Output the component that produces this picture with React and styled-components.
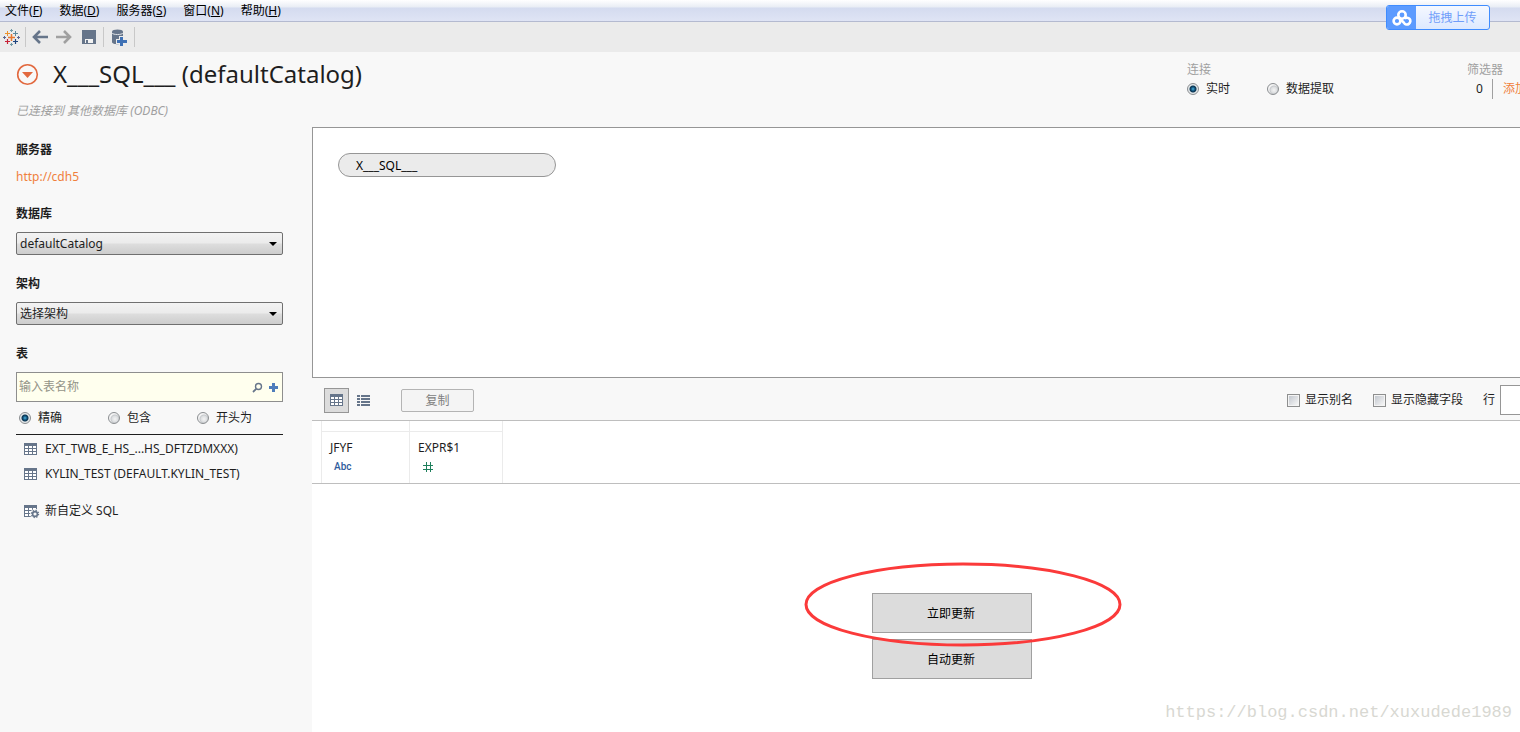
import React from "react";
import styled, { createGlobalStyle } from "styled-components";

const GlobalStyle = createGlobalStyle`
  * {
    box-sizing: border-box;
  }
  body {
    margin: 0;
    background: #ffffff;
    color: #1e1e1e;
    font-family: "Noto Sans", "Noto Sans CJK SC", sans-serif;
    font-size: 12px;
    line-height: 16px;
  }
  button, input, select {
    font: inherit;
    color: inherit;
    margin: 0;
  }
`

const Page = styled.div`
  display: flex;
  flex-direction: column;
  min-height: 100vh;
  overflow: hidden;
  background: #f8f8f8;
  position: relative;
`

const MenuBar = styled.nav`
  display: flex;
  gap: 17px;
  height: 22px;
  padding: 0 5px;
  border-bottom: 1px solid #b4bad0;
  background: linear-gradient(#ffffff 0, #e9edf5 7px, #d4dbef 8px, #dfe4f5 21px);
`

const MenuItem = styled.button`
  border: 0;
  padding: 0;
  background: none;
  color: #000000;
  line-height: 20px;
`

const ToolBar = styled.div`
  display: flex;
  align-items: center;
  height: 30px;
  background: #ebebeb;
`

const ToolButton = styled.button`
  display: flex;
  justify-content: center;
  width: ${(props) => props.$width || 24}px;
  border: 0;
  padding: 0;
  background: none;
`

const StartButton = styled(ToolButton)`
  width: 25px;
  padding-right: 2px;
`

const Divider = styled.span`
  width: 1px;
  height: 20px;
  background: #c8c8c8;
`

const UploadButton = styled.button`
  position: absolute;
  top: 5px;
  right: 30px;
  display: flex;
  width: 104px;
  height: 25px;
  padding: 0;
  border: 1px solid #3f8cff;
  border-radius: 3px;
  overflow: hidden;
  background: linear-gradient(#f5f8ff, #dde9ff);
  color: #6f9dfa;
  line-height: 24px;
`

const UploadIcon = styled.span`
  display: flex;
  align-items: center;
  justify-content: center;
  width: 29px;
  height: 23px;
  background: #5c9bff;
`

const UploadText = styled.span`
  flex: 1;
`

const Header = styled.header`
  display: flex;
  justify-content: space-between;
  height: 75px;
  padding-left: 16px;
`

const TitleRow = styled.div`
  display: flex;
  align-items: center;
  gap: 14px;
  height: 44px;
`

const Title = styled.h1`
  margin: 0;
  font-size: 24px;
  line-height: 32px;
  font-weight: 400;
  white-space: nowrap;
`

const RoundButton = styled.button`
  display: flex;
  border: 0;
  padding: 0;
  background: none;
`

const Subtitle = styled.p`
  margin: 7px 0 0;
  color: #a0a0a0;
  font-style: italic;
`

const HeaderOptions = styled.div`
  display: flex;
  flex: none;
  padding-top: 10px;
  width: 333px;
`

const ConnectionGroup = styled.fieldset`
  flex: none;
  width: 280px;
  margin: 0;
  padding: 0;
  border: 0;
`

const GroupLabel = styled.legend`
  padding: 0;
  color: #a0a0a0;
`

const OptionRow = styled.div`
  display: flex;
  align-items: center;
  height: 22px;
`

const RadioLabel = styled.label`
  display: flex;
  align-items: center;
  gap: 7px;
  width: ${(props) => props.$width}px;
  white-space: nowrap;
`

const Radio = styled.input.attrs({ type: "radio" })`
  appearance: none;
  width: 12px;
  height: 12px;
  border: 1px solid #8a8d90;
  border-radius: 50%;
  background: radial-gradient(circle at 60% 60%, #f4f4f4 0, #dcdee0 3px, #c6c9cc 4px, #f4f4f4 5px);
  &:checked {
    background: radial-gradient(circle, #4cb4e0 0, #0f4f78 2px, #0d3550 3px, #e4e8ea 4px);
  }
`

const FilterGroup = styled.div`
  flex: none;
  width: 125px;
`

const FilterLabel = styled.div`
  color: #a0a0a0;
`

const FilterCount = styled.span`
  width: 26px;
  padding-left: 9px;
  border-right: 1px solid #a0a0a0;
  line-height: 20px;
`

const Link = styled.a`
  color: #f0803c;
  text-decoration: none;
  padding-left: ${(props) => props.$indent || 0}px;
`

const Body = styled.div`
  display: flex;
  flex: 1;
`

const SideBar = styled.aside`
  flex: none;
  width: 312px;
  padding: 15px 29px 0 16px;
`

const Heading = styled.h2`
  display: block;
  margin: 0;
  font-size: 12px;
  line-height: 16px;
  font-weight: 700;
`

const ServerRow = styled.div`
  padding: 11px 0 21px;
`

const Field = styled.div`
  display: grid;
  align-items: center;
  margin: 10px 0 21px;
`

const Select = styled.select`
  grid-area: 1 / 1;
  appearance: none;
  width: 100%;
  height: 23px;
  padding: 1px 3px 0;
  border: 1px solid #707070;
  border-radius: 2px;
  background: linear-gradient(#f3f3f3 0, #ebebeb 10px, #dddddd 11px, #cdcdcd 21px);
`

const Arrow = styled.span`
  grid-area: 1 / 1;
  justify-self: end;
  margin-right: 6px;
  border: 4px solid transparent;
  border-top-color: #000000;
  border-bottom: 0;
  pointer-events: none;
`

const SearchBox = styled.div`
  display: flex;
  align-items: center;
  gap: 6px;
  height: 30px;
  margin-top: 10px;
  padding: 0 4px 0 2px;
  border: 1px solid #8e8e8e;
  background: #ffffee;
`

const SearchInput = styled.input`
  flex: 1;
  min-width: 0;
  padding: 0;
  border: 0;
  background: none;
  &::placeholder {
    color: #949488;
  }
`

const MatchRow = styled.div`
  display: flex;
  align-items: center;
  height: 33px;
  padding-left: 3px;
  border-bottom: 1px solid #1e1e1e;
`

const TableList = styled.ul`
  margin: 1px 0 0;
  padding: 0 0 0 8px;
  list-style: none;
`

const TableItem = styled.li`
  display: flex;
  align-items: center;
  gap: 7px;
  height: 25px;
  margin-top: ${(props) => props.$gap || 0}px;
  white-space: nowrap;
`

const Main = styled.main`
  display: flex;
  flex-direction: column;
  flex: 1;
  min-width: 0;
  background: #ffffff;
`

const Canvas = styled.section`
  height: 251px;
  padding: 25px;
  border: 1px solid #969696;
  border-right: 0;
`

const TablePill = styled.div`
  width: 218px;
  height: 24px;
  padding-left: 17px;
  border: 1px solid #969696;
  border-radius: 12px;
  background: #ebebeb;
  color: #000000;
  line-height: 24px;
`

const GridBar = styled.div`
  display: flex;
  align-items: center;
  justify-content: space-between;
  height: 43px;
  padding: 2px 0 0 12px;
  border-bottom: 1px solid #bebebe;
  background: #f8f8f8;
`

const BarGroup = styled.div`
  display: flex;
  align-items: center;
  flex: none;
`

const ViewButton = styled.button`
  display: flex;
  align-items: center;
  justify-content: center;
  width: 25px;
  height: 25px;
  margin-right: 2px;
  padding: 0;
  border: 1px solid ${(props) => (props.$active ? "#969696" : "transparent")};
  background: ${(props) => (props.$active ? "#dcdcdc" : "none")};
`

const CopyButton = styled.button`
  width: 73px;
  height: 23px;
  margin-left: 23px;
  padding: 2px 0 0;
  border: 1px solid #b4b4b4;
  border-radius: 2px;
  background: #f4f4f4;
  color: #808080;
`

const CheckLabel = styled.label`
  display: flex;
  align-items: center;
  gap: 5px;
  margin-right: 20px;
`

const CheckBox = styled.input.attrs({ type: "checkbox" })`
  appearance: none;
  width: 13px;
  height: 13px;
  border: 1px solid #8e8f8f;
  background: linear-gradient(135deg, #c3c8cf, #f6f6f6) content-box, #f4f4f4;
  padding: 1px;
`

const RowsLabel = styled.label`
  display: flex;
  align-items: center;
  gap: 5px;
`

const RowsInput = styled.input`
  width: 20px;
  height: 30px;
  border: 1px solid #969696;
  border-right: 0;
  background: #ffffff;
`

const GridArea = styled.div`
  height: 63px;
  padding-left: 9px;
  border-bottom: 1px solid #bebebe;
`

const Grid = styled.table`
  border-collapse: collapse;
  table-layout: fixed;
  width: 182px;
  height: 62px;
`

const SpacerCell = styled.td`
  width: ${(props) => props.$width}px;
  height: 10px;
  padding: 0;
  border: 1px solid #ebebeb;
  border-top: 0;
`

const ColumnCell = styled.th`
  padding: 8px 8px 0;
  border: 1px solid #ebebeb;
  border-bottom: 0;
  font-weight: 400;
  text-align: left;
  vertical-align: top;
`

const TypeTag = styled.div`
  display: flex;
  align-items: center;
  height: 22px;
  padding-left: 4px;
  color: #2f5c9c;
  font-family: Roboto, sans-serif;
  font-size: 10px;
  font-weight: 500;
`

const UpdatePane = styled.section`
  display: flex;
  justify-content: center;
  flex: 1;
  padding: 109px 0 53px 72px;
`

const UpdateButtons = styled.div`
  position: relative;
  display: flex;
  flex-direction: column;
  gap: 6px;
  width: 160px;
`

const UpdateButton = styled.button`
  height: 40px;
  padding: 2px 2px 0 0;
  border: 1px solid #a0a0a0;
  background: #dcdcdc;
  color: #000000;
`

const Highlight = styled.svg`
  position: absolute;
  left: -68px;
  top: -31px;
  pointer-events: none;
`

const Watermark = styled.span`
  position: absolute;
  right: 8px;
  bottom: 7px;
  color: #d8d8d2;
  font-family: "Liberation Mono", monospace;
  font-size: 17px;
  line-height: 24px;
`

const menus = [
  ["文件", "F"],
  ["数据", "D"],
  ["服务器", "S"],
  ["窗口", "N"],
  ["帮助", "H"],
]

const TableauIcon = () => (
  <svg width="17" height="17" viewBox="0 0 17 17" fill="none">
    <path d="M8.5 5v7M5 8.5h7" stroke="#e8762d" strokeWidth="1.5" />
    <path d="M4.5 2v5M2 4.5h5" stroke="#eb912c" />
    <path d="M12.5 2v5M10 4.5h5" stroke="#59879b" />
    <path d="M4.5 10v5M2 12.5h5" stroke="#c72035" strokeWidth="1.2" />
    <path d="M12.5 10v5M10 12.5h5" stroke="#1f447e" strokeWidth="1.2" />
    <path d="M8.5 0v3M7 1.5h3M8.5 14v3M7 15.5h3" stroke="#7099a6" />
    <path d="M1.5 7v3M0 8.5h3M15.5 7v3M14 8.5h3" stroke="#5b6591" />
  </svg>
)

const ArrowIcon = ({ color, flip }) => (
  <svg width="16" height="14" viewBox="0 0 16 14" fill="none">
    <path
      d={flip ? "M0 7h14M8 1l6 6-6 6" : "M16 7H2M8 1L2 7l6 6"}
      stroke={color}
      strokeWidth="2.6"
    />
  </svg>
)

const SaveIcon = () => (
  <svg width="14" height="14" viewBox="0 0 14 14">
    <path d="M0 0h14v14H0z" fill="#66758a" />
    <path d="M3 9h8v4H3z" fill="#f3f3f3" />
    <path d="M4 10h2v3H4z" fill="#66758a" />
  </svg>
)

const DatabaseIcon = () => (
  <svg width="16" height="17" viewBox="0 0 16 17">
    <path d="M1 3v10c0 3 11 3 11 0V3z" fill="#66758a" />
    <ellipse cx="6.5" cy="2.5" rx="5.5" ry="2" fill="#66758a" />
    <path d="M1 4c1 2 10 2 11 0" fill="none" stroke="#dfe2e6" />
    <path d="M8 7h5v3h3v5h-3v2H8v-2H5v-5h3z" fill="#ebebeb" />
    <path d="M9 8h3v3h4v3h-4v3H9v-3H6v-3h3z" fill="#3f71b5" />
  </svg>
)

const CloudIcon = () => (
  <svg width="20" height="16" viewBox="0 0 20 16" fill="none" stroke="#ffffff" strokeWidth="2.6">
    <circle cx="10" cy="5" r="3.7" />
    <circle cx="5" cy="11" r="3.4" />
    <path d="M8 8.6l4 4.2a3.4 3.4 0 1 0 .6-4.2" />
  </svg>
)

const GridIcon = ({ gear }) => (
  <svg width="14" height="14" viewBox="0 0 14 14" overflow="visible">
    <path d="M0 1h13v12H0z" fill="#66758a" />
    <path
      d="M1 4h3v2H1zM5 4h3v2H5zM9 4h3v2H9zM1 7h3v2H1zM5 7h3v2H5zM9 7h3v2H9zM1 10h3v2H1zM5 10h3v2H5zM9 10h3v2H9z"
      fill="#ffffff"
    />
    {gear && (
      <g fill="none">
        <circle cx="11" cy="10" r="5" fill="#f8f8f8" />
        <circle cx="11" cy="10" r="2.4" stroke="#66758a" strokeWidth="1.6" />
        <circle cx="11" cy="10" r="3.6" stroke="#66758a" strokeWidth="1.2" strokeDasharray="1.4 1.43" />
      </g>
    )}
  </svg>
)

const ListIcon = () => (
  <svg width="13" height="11" viewBox="0 0 13 11" fill="#66758a">
    <path d="M0 0h3v2H0zM4 0h9v2H4zM0 3h3v2H0zM4 3h9v2H4zM0 6h3v2H0zM4 6h9v2H4zM0 9h3v2H0zM4 9h9v2H4z" />
  </svg>
)

const App = () => {
  return (
    <Page>
      <GlobalStyle />
      <MenuBar>
        {menus.map(([name, key]) => (
          <MenuItem key={key}>
            {name}(<u>{key}</u>)
          </MenuItem>
        ))}
      </MenuBar>
      <ToolBar>
        <StartButton aria-label="Start"><TableauIcon /></StartButton>
        <Divider />
        <ToolButton $width={28} aria-label="Back"><ArrowIcon color="#66758a" /></ToolButton>
        <ToolButton $width={20} aria-label="Forward"><ArrowIcon color="#a0a0a0" flip /></ToolButton>
        <ToolButton $width={29} aria-label="Save"><SaveIcon /></ToolButton>
        <Divider />
        <ToolButton $width={30} aria-label="New data source"><DatabaseIcon /></ToolButton>
        <Divider />
      </ToolBar>
      <UploadButton>
        <UploadIcon><CloudIcon /></UploadIcon>
        <UploadText>拖拽上传</UploadText>
      </UploadButton>

      <Header>
        <div>
          <TitleRow>
            <RoundButton aria-label="Data source menu">
              <svg width="23" height="23" viewBox="0 0 23 23">
                <circle cx="11.5" cy="11.5" r="9.8" fill="none" stroke="#e2693f" strokeWidth="1.6" />
                <path d="M6 9h11l-5.5 6z" fill="#e2693f" />
              </svg>
            </RoundButton>
            <Title>X___SQL___ (defaultCatalog)</Title>
          </TitleRow>
          <Subtitle>已连接到 其他数据库 (ODBC)</Subtitle>
        </div>
        <HeaderOptions>
          <ConnectionGroup>
            <GroupLabel>连接</GroupLabel>
            <OptionRow>
              <RadioLabel $width={80}>
                <Radio name="connection" defaultChecked />
                实时
              </RadioLabel>
              <RadioLabel $width={80}>
                <Radio name="connection" />
                数据提取
              </RadioLabel>
            </OptionRow>
          </ConnectionGroup>
          <FilterGroup>
            <FilterLabel>筛选器</FilterLabel>
            <OptionRow>
              <FilterCount>0</FilterCount>
              <Link href="#filters" $indent={10}>添加</Link>
            </OptionRow>
          </FilterGroup>
        </HeaderOptions>
      </Header>

      <Body>
        <SideBar>
          <Heading>服务器</Heading>
          <ServerRow>
            <Link href="#server">http://cdh5</Link>
          </ServerRow>
          <Heading as="label" htmlFor="database">数据库</Heading>
          <Field>
            <Select id="database">
              <option>defaultCatalog</option>
            </Select>
            <Arrow />
          </Field>
          <Heading as="label" htmlFor="schema">架构</Heading>
          <Field>
            <Select id="schema">
              <option>选择架构</option>
            </Select>
            <Arrow />
          </Field>
          <Heading as="label" htmlFor="table">表</Heading>
          <SearchBox>
            <SearchInput id="table" placeholder="输入表名称" />
            <svg width="11" height="11" viewBox="0 0 11 11" fill="none" stroke="#66758a">
              <circle cx="6.5" cy="4.5" r="3" strokeWidth="1.4" />
              <path d="M4.2 6.8L1 10" strokeWidth="1.8" />
            </svg>
            <svg width="9" height="9" viewBox="0 0 9 9">
              <path d="M3 0h3v3h3v3H6v3H3V6H0V3h3z" fill="#4f7dbb" />
            </svg>
          </SearchBox>
          <MatchRow>
            <RadioLabel $width={89}>
              <Radio name="match" defaultChecked />
              精确
            </RadioLabel>
            <RadioLabel $width={89}>
              <Radio name="match" />
              包含
            </RadioLabel>
            <RadioLabel $width={80}>
              <Radio name="match" />
              开头为
            </RadioLabel>
          </MatchRow>
          <TableList>
            <TableItem>
              <GridIcon />
              EXT_TWB_E_HS_...HS_DFTZDMXXX)
            </TableItem>
            <TableItem>
              <GridIcon />
              KYLIN_TEST (DEFAULT.KYLIN_TEST)
            </TableItem>
            <TableItem $gap={12}>
              <GridIcon gear />
              新自定义 SQL
            </TableItem>
          </TableList>
        </SideBar>

        <Main>
          <Canvas>
            <TablePill>X___SQL___</TablePill>
          </Canvas>
          <GridBar>
            <BarGroup>
              <ViewButton $active aria-label="Grid view"><GridIcon /></ViewButton>
              <ViewButton aria-label="List view"><ListIcon /></ViewButton>
              <CopyButton>复制</CopyButton>
            </BarGroup>
            <BarGroup>
              <CheckLabel>
                <CheckBox />
                显示别名
              </CheckLabel>
              <CheckLabel>
                <CheckBox />
                显示隐藏字段
              </CheckLabel>
              <RowsLabel>
                行
                <RowsInput />
              </RowsLabel>
            </BarGroup>
          </GridBar>
          <GridArea>
            <Grid>
              <tbody>
                <tr>
                  <SpacerCell $width={88} />
                  <SpacerCell $width={93} />
                </tr>
                <tr>
                  <ColumnCell>
                    JFYF
                    <TypeTag>Abc</TypeTag>
                  </ColumnCell>
                  <ColumnCell>
                    EXPR$1
                    <TypeTag>
                      <svg width="12" height="12" viewBox="0 0 12 12" fill="none" stroke="#1f7f5c">
                        <path d="M4.5 1v10M8.5 1v10M1 4.5h10M1 8.5h10" />
                      </svg>
                    </TypeTag>
                  </ColumnCell>
                </tr>
              </tbody>
            </Grid>
          </GridArea>
          <UpdatePane>
            <UpdateButtons>
              <UpdateButton>立即更新</UpdateButton>
              <UpdateButton>自动更新</UpdateButton>
              <Highlight width="318" height="86" viewBox="0 0 318 86">
                <ellipse cx="159" cy="42.5" rx="157" ry="40.5" fill="none" stroke="#fb3a3a" strokeWidth="3" />
              </Highlight>
            </UpdateButtons>
          </UpdatePane>
        </Main>
      </Body>
      <Watermark>https://blog.csdn.net/xuxudede1989</Watermark>
    </Page>
  )
}

export default App;
